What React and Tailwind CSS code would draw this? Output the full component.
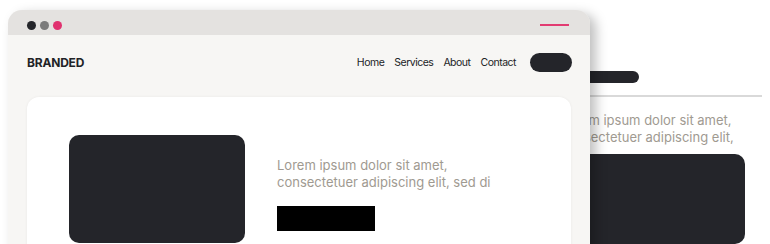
export default function App() {
  const navLinks = ['Home', 'Services', 'About', 'Contact'];

  return (
    <div className="relative w-[770px] h-[244px] overflow-hidden bg-white" style={{ fontFamily: 'Inter, "Noto Sans", sans-serif' }}>

      {/* Back window */}
      <div className="absolute left-[470px] top-[59px] right-[8px] h-[300px] bg-white flex flex-col">
        <div className="h-[38px] pl-[69px] pt-[12px] border-b-2 border-[#d9d9d9]">
          <div className="w-[100px] h-[12px] rounded-full bg-[#24252a]" />
        </div>
        <div className="pl-[91px] pt-[15px]">
          <p className="text-[13px] leading-[17px] text-[#a09a91] whitespace-nowrap">
            Lorem ipsum dolor sit amet,<br />consectetuer adipiscing elit,
          </p>
          <div className="mt-[8px] w-[184px] h-[90px] rounded-[10px] bg-[#24252a]" />
        </div>
      </div>

      {/* Front window */}
      <div className="absolute left-[8px] top-[10px] w-[582px] h-[300px] rounded-t-[14px] overflow-hidden bg-[#f7f6f4] shadow-[6px_4px_12px_rgba(0,0,0,0.25)] flex flex-col">
        <div className="h-[25px] shrink-0 bg-[#e4e2e0] flex items-start justify-between pl-[19px] pr-[21px] pt-[11px]">
          <div className="flex gap-[4px]">
            <span className="w-[9px] h-[9px] rounded-full bg-[#24252a]" />
            <span className="w-[9px] h-[9px] rounded-full bg-[#7b7b7b]" />
            <span className="w-[9px] h-[9px] rounded-full bg-[#e0316f]" />
          </div>
          <div className="mt-[3px] w-[29px] h-[2px] bg-[#e23c72]" />
        </div>

        <div className="h-[55px] shrink-0 flex items-center justify-between pl-[19px] pr-[18px]">
          <span className="text-[12px] font-bold text-[#222326] tracking-[-0.2px]">BRANDED</span>
          <div className="flex items-center">
            <nav className="flex gap-[10px] text-[10.5px] tracking-[-0.5px] text-[#222326]">
              {navLinks.map((l) => (
                <span key={l}>{l}</span>
              ))}
            </nav>
            <div className="ml-[14px] w-[42px] h-[19px] rounded-full bg-[#24252a]" />
          </div>
        </div>

        <div className="mt-[7px] mx-[19px] h-[200px] rounded-[12px] bg-white shadow-[0_0_3px_rgba(0,0,0,0.06)] flex pl-[42px] pt-[38px] gap-[32px]">
          <div className="w-[176px] h-[108px] rounded-[10px] bg-[#24252a]" />
          <div className="pt-[22px]">
            <p className="text-[13px] leading-[17px] text-[#a09a91]">
              Lorem ipsum dolor sit amet,<br />consectetuer adipiscing elit, sed di
            </p>
            <div className="mt-[15px] w-[98px] h-[25px] bg-black" />
          </div>
        </div>
      </div>
    </div>
  );
}
